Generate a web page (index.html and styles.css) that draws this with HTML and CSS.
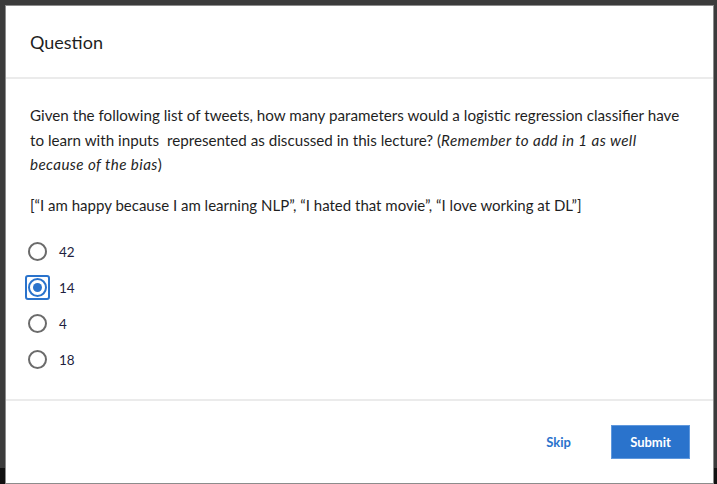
FILE: index.html
```html
<!DOCTYPE html>
<html>
<head>
<meta charset="utf-8">
<link rel="stylesheet" href="styles.css">
</head>
<body>
<div class="backdrop">
  <div class="modal">
    <div class="modal-header">
      <h2 class="title">Question</h2>
    </div>
    <div class="modal-body">
      <p class="prompt">Given the following list of tweets, how many parameters would a logistic regression classifier have to learn with inputs&nbsp; represented as discussed in this lecture? (<em>Remember to add in 1 as well because of the bias</em>)</p>
      <p class="tweets">[“I am happy because I am learning NLP”, “I hated that movie”, “I love working at DL”]</p>
      <div class="options">
        <label class="option">
          <span class="radio-wrap"><span class="radio"></span></span>
          <span class="option-label">42</span>
        </label>
        <label class="option">
          <span class="radio-wrap focused"><span class="radio checked"></span></span>
          <span class="option-label">14</span>
        </label>
        <label class="option">
          <span class="radio-wrap"><span class="radio"></span></span>
          <span class="option-label">4</span>
        </label>
        <label class="option">
          <span class="radio-wrap"><span class="radio"></span></span>
          <span class="option-label">18</span>
        </label>
      </div>
    </div>
    <div class="modal-footer">
      <button class="btn-link">Skip</button>
      <button class="btn-primary">Submit</button>
    </div>
  </div>
</div>
</body>
</html>
```

FILE: styles.css
```css
html, body {
  margin: 0;
  padding: 0;
  height: 100%;
}
body {
  background: #3b3b3b;
  font-family: "Lato", "Open Sans", sans-serif;
  color: #1f1f1f;
}
.backdrop {
  padding: 5px 3px 0 5px;
  height: 484px;
  box-sizing: border-box;
  background: linear-gradient(#3b3b3b 0, #3b3b3b 468px, #111 468px);
}
.modal {
  background: #fff;
  border: 1px solid #8c8c8c;
  width: 709px;
  height: 479px;
  box-sizing: border-box;
  display: flex;
  flex-direction: column;
}
.modal-header {
  height: 71px;
  border-bottom: 2px solid #ebebeb;
  display: flex;
  align-items: center;
  padding: 0 24px;
}
.title {
  margin: 0;
  font-size: 18px;
  font-weight: 400;
  color: #1f1f1f;
}
.modal-body {
  padding: 24px 24px 21px 24px;
  border-bottom: 2px solid #ebebeb;
}
.prompt {
  margin: 0;
  font-size: 15.2px;
  line-height: 24.5px;
  max-width: 652px;
}
.prompt em {
  font-style: italic;
  letter-spacing: 0.4px;
}
.tweets {
  margin: 16px 0 0 0;
  font-size: 15px;
  line-height: 24px;
}
.options {
  margin-top: 17px;
  display: flex;
  flex-direction: column;
}
.option {
  height: 36px;
  display: flex;
  align-items: center;
  margin-left: -5px;
}
.radio-wrap {
  width: 25px;
  height: 25px;
  box-sizing: border-box;
  display: flex;
  align-items: center;
  justify-content: center;
  border: 2px solid transparent;
  border-radius: 3px;
}
.radio-wrap.focused {
  border-color: #2a73cc;
}
.radio {
  width: 19px;
  height: 19px;
  box-sizing: border-box;
  border: 2px solid #6b6b6b;
  border-radius: 50%;
  background: #fff;
  display: flex;
  align-items: center;
  justify-content: center;
}
.radio.checked {
  border-color: #2a73cc;
}
.radio.checked::after {
  content: "";
  width: 9px;
  height: 9px;
  border-radius: 50%;
  background: #2a73cc;
}
.option-label {
  margin-left: 9px;
  font-size: 13.5px;
  color: #1f1f3f;
}
.modal-footer {
  flex: 1;
  display: flex;
  align-items: center;
  justify-content: flex-end;
  padding: 0 23px 0 0;
}
.btn-link {
  background: none;
  border: none;
  font-family: inherit;
  font-weight: 700;
  font-size: 13px;
  color: #2a73cc;
  padding: 8px 0;
  margin-right: 40px;
  cursor: pointer;
}
.btn-primary {
  background: #2a73cc;
  border: 1px solid #5f98dd;
  color: #fff;
  font-family: inherit;
  font-weight: 700;
  font-size: 13px;
  width: 79px;
  height: 34px;
  cursor: pointer;
}
```
